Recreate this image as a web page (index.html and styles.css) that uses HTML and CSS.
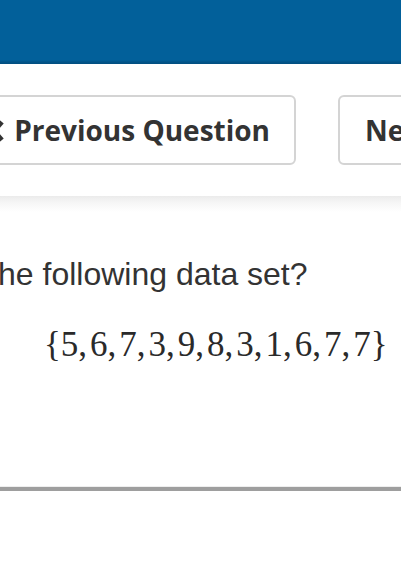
FILE: index.html
```html
<!DOCTYPE html>
<html>
<head>
<meta charset="utf-8">
<link rel="stylesheet" href="styles.css">
</head>
<body>
<header class="topbar"></header>
<nav class="qnav">
  <a class="btn btn-prev"><svg class="chev" width="14" height="22" viewBox="0 0 14 22"><path d="M11 2 L3 11 L11 20" fill="none" stroke="#333" stroke-width="4.6" stroke-linecap="butt" stroke-linejoin="miter"/></svg><span>Previous Question</span></a>
  <a class="btn btn-next"><span>Next Question</span></a>
</nav>
<main class="content">
  <p class="question">he following data set?</p>
  <div class="math">{5,<span class="sp"></span>6,<span class="sp"></span>7,<span class="sp"></span>3,<span class="sp"></span>9,<span class="sp"></span>8,<span class="sp"></span>3,<span class="sp"></span>1,<span class="sp"></span>6,<span class="sp"></span>7,<span class="sp"></span>7}</div>
</main>
<div class="rule"></div>
</body>
</html>
```
FILE: styles.css
```css
html, body {
  margin: 0;
  padding: 0;
  background: #fff;
  overflow: hidden;
  width: 401px;
  height: 576px;
}
.topbar {
  height: 64px;
  background: linear-gradient(to bottom, #02609a 0, #02609a 60px, #025488 62px, #024f80 64px);
}
.qnav {
  height: 132px;
  display: flex;
  align-items: flex-start;
  padding-top: 31px;
  box-sizing: border-box;
  overflow: hidden;
}
.btn {
  flex: none;
  height: 70px;
  box-sizing: border-box;
  border: 2px solid #d4d4d4;
  border-radius: 6px;
  display: flex;
  align-items: center;
  font-family: "Open Sans", sans-serif;
  font-weight: 700;
  font-size: 28px;
  color: #333;
  background: #fff;
}
.btn-prev {
  width: 330px;
  margin-left: -34px;
  justify-content: flex-end;
  padding-right: 24px;
  gap: 9px;
}
.chev {
  display: block;
  margin-top: 1px;
}
.btn-next {
  width: 300px;
  margin-left: 42px;
  padding-left: 25px;
}
.content {
  height: 290px;
  background: linear-gradient(to bottom, #ebebeb 0, #f5f5f5 6px, #fff 16px);
  padding-top: 58px;
  box-sizing: border-box;
}
.question {
  margin: 0;
  font-family: "Liberation Sans", Arial, sans-serif;
  font-size: 32px;
  line-height: 40px;
  color: #333;
  white-space: nowrap;
  margin-left: -2px;
}
.math {
  margin-top: 31px;
  padding-left: 44px;
  font-family: "Liberation Serif", serif;
  font-size: 35px;
  line-height: 40px;
  color: #2a2a2a;
  white-space: nowrap;
}
.sp {
  display: inline-block;
  width: 3px;
}
.rule {
  height: 1px;
  background: #eeeeee;
  border-bottom: 4px solid #9e9e9e;
}
```
